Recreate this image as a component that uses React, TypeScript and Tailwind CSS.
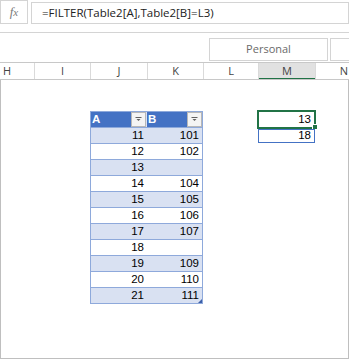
import React from "react";

const rows: [number, number | null][] = [
  [11, 101],
  [12, 102],
  [13, null],
  [14, 104],
  [15, 105],
  [16, 106],
  [17, 107],
  [18, null],
  [19, 109],
  [20, 110],
  [21, 111],
];

function FilterBtn() {
  return (
    <div className="w-[15px] h-[15px] bg-[#F4F4F4] border border-[#B7B7B7] flex items-center justify-center">
      <svg width="7" height="5" viewBox="0 0 7 5">
        <rect x="0.5" y="0" width="6" height="1" fill="#606060" />
        <polygon points="1.5,2 5.5,2 3.5,4" fill="#606060" />
      </svg>
    </div>
  );
}

export default function App() {
  const cols = [
    { l: "H", w: "w-[35px]", left: true },
    { l: "I", w: "w-[56px]" },
    { l: "J", w: "w-[57px]" },
    { l: "K", w: "w-[56px]" },
    { l: "L", w: "w-[55px]" },
    { l: "M", w: "w-[57px]", sel: true },
    { l: "N", w: "w-[57px]" },
  ];
  return (
    <div className="w-[349px] h-[359px] overflow-hidden bg-white flex flex-col font-['Open_Sans',sans-serif]">
      {/* formula bar */}
      <div className="flex h-[24px] shrink-0">
        <div className="w-[28px] h-[24px] border border-[#D4D4D4] flex items-center justify-center font-['Liberation_Serif',serif] italic text-[13px] text-[#7A7A7A]">
          <span>f<span className="text-[11px]">x</span></span>
        </div>
        <div className="ml-[3px] mt-[2px] h-[22px] flex-1 border border-[#D4D4D4] flex items-center pl-[10px] text-[11.5px] text-[#222]">
          =FILTER(Table2[A],Table2[B]=L3)
        </div>
      </div>
      <div className="h-[9px] shrink-0 border-b border-[#D4D4D4]" />
      {/* style boxes area */}
      <div className="h-[29px] shrink-0 flex pl-[209px] pt-[5px] gap-[2px] overflow-hidden">
        <div className="w-[119px] h-[23px] shrink-0 border border-[#D4D4D4] flex items-center justify-center text-[11px] text-[#6A6A6A]">
          Personal
        </div>
        <div className="w-[40px] h-[23px] shrink-0 border border-[#D4D4D4]" />
      </div>
      {/* column headers */}
      <div className="h-[18px] shrink-0 flex border-t border-b border-[#C8C8C8] overflow-hidden">
        {cols.map((c) => (
          <div
            key={c.l}
            className={`${c.w} shrink-0 h-full relative border-r border-[#DADADA] flex items-center text-[11px] text-[#444] ${
              c.left ? "justify-start pl-[3px]" : "justify-center"
            } ${c.sel ? "bg-[#E1E1E1]" : ""}`}
          >
            {c.l}
            {c.sel && <div className="absolute left-0 right-0 bottom-[-1px] h-[2px] bg-[#217346]" />}
          </div>
        ))}
      </div>
      {/* sheet body */}
      <div className="flex-1 flex border-l border-r border-b border-[#BFBFBF] pt-[31px] font-['Liberation_Sans',sans-serif] text-[11.5px] text-black">
        <div className="w-[89px] shrink-0" />
        {/* table */}
        <div className="w-[113px] shrink-0 self-start border border-[#8EA9DB] relative">
          <div className="h-[15px] flex">
            <div className="w-[56px] flex bg-[#4472C4] border-r border-[#D9E1F2]">
              <div className="flex-1 pl-[1px] text-white font-bold leading-[15px]">A</div>
              <FilterBtn />
            </div>
            <div className="flex-1 flex bg-[#4472C4]">
              <div className="flex-1 pl-[1px] text-white font-bold leading-[15px]">B</div>
              <FilterBtn />
            </div>
          </div>
          {rows.map(([a, b], i) => (
            <div
              key={a}
              className={`h-[16px] flex border-t border-[#8EA9DB] leading-[15px] ${
                i % 2 === 0 ? "bg-[#D9E1F2]" : "bg-white"
              }`}
            >
              <div className="w-[56px] text-right pr-[3px]">{a}</div>
              <div className="flex-1 text-right pr-[3px]">{b ?? ""}</div>
            </div>
          ))}
          <div className="absolute right-0 bottom-0 w-[4px] h-[4px] bg-[#3C5FA8] [clip-path:polygon(100%_0,100%_100%,0_100%)]" />
        </div>
        <div className="w-[55px] shrink-0" />
        {/* M column */}
        <div className="w-[57px] shrink-0 flex flex-col">
          <div className="h-[16px] relative text-right pr-[4px] leading-[16px]">
            13
            <div className="absolute -left-px -top-px -right-px -bottom-[2px] border-2 border-[#217346]" />
            <div className="absolute -right-[3px] -bottom-[3px] w-[6px] h-[6px] bg-[#217346] border border-white" />
          </div>
          <div className="h-[16px] relative text-right pr-[4px] leading-[16px]">
            18
            <div className="absolute left-0 right-0 top-[2px] bottom-0 border border-[#4472C4]" />
          </div>
        </div>
      </div>
    </div>
  );
}
